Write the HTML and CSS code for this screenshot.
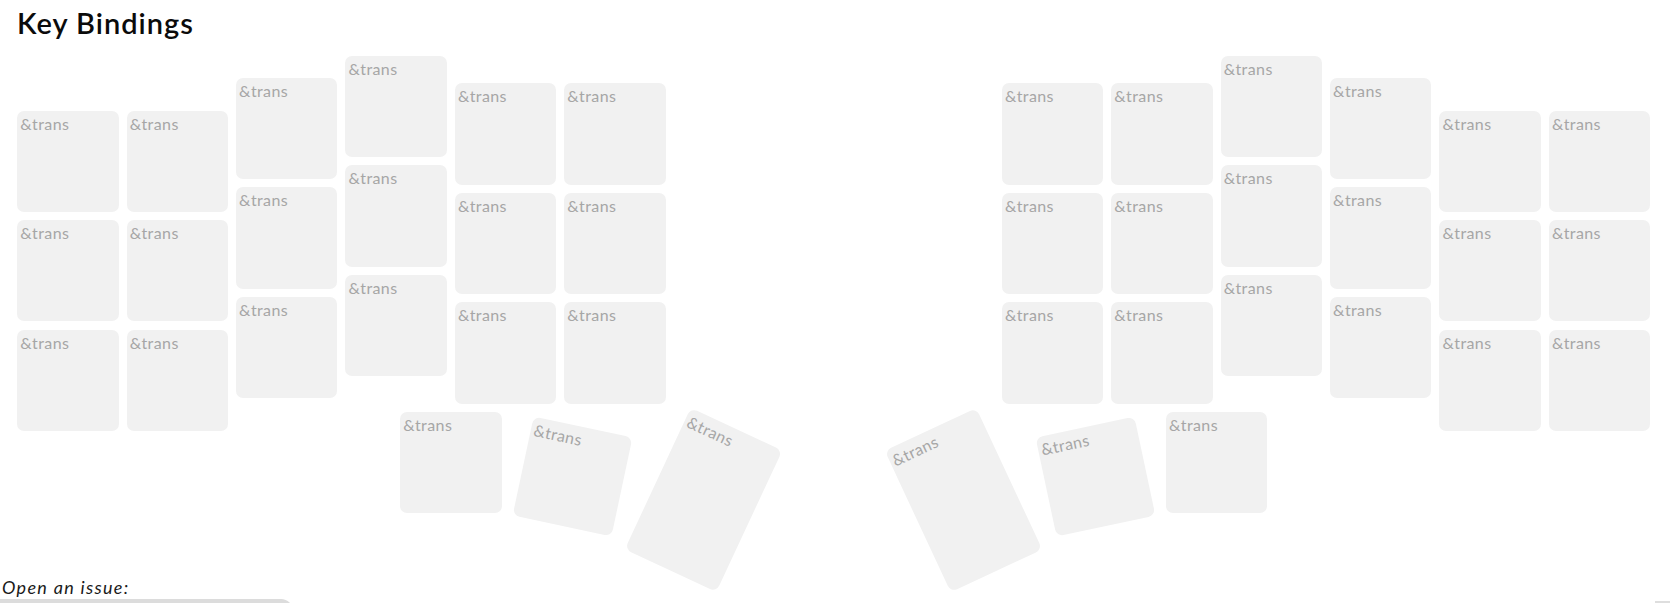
FILE: index.html
```html
<!DOCTYPE html>
<html lang="en">
<head>
<meta charset="utf-8">
<title>Key Bindings</title>
<link rel="stylesheet" href="styles.css">
</head>
<body>
<section class="bindings">
  <h2 class="title">Key Bindings</h2>
  <div class="keyboard">
    <div class="key" style="--x:0;--y:0.5"><span class="label">&amp;trans</span></div>
    <div class="key" style="--x:1;--y:0.5"><span class="label">&amp;trans</span></div>
    <div class="key" style="--x:2;--y:0.2"><span class="label">&amp;trans</span></div>
    <div class="key" style="--x:3;--y:0"><span class="label">&amp;trans</span></div>
    <div class="key" style="--x:4;--y:0.25"><span class="label">&amp;trans</span></div>
    <div class="key" style="--x:5;--y:0.25"><span class="label">&amp;trans</span></div>
    <div class="key" style="--x:9;--y:0.25"><span class="label">&amp;trans</span></div>
    <div class="key" style="--x:10;--y:0.25"><span class="label">&amp;trans</span></div>
    <div class="key" style="--x:11;--y:0"><span class="label">&amp;trans</span></div>
    <div class="key" style="--x:12;--y:0.2"><span class="label">&amp;trans</span></div>
    <div class="key" style="--x:13;--y:0.5"><span class="label">&amp;trans</span></div>
    <div class="key" style="--x:14;--y:0.5"><span class="label">&amp;trans</span></div>

    <div class="key" style="--x:0;--y:1.5"><span class="label">&amp;trans</span></div>
    <div class="key" style="--x:1;--y:1.5"><span class="label">&amp;trans</span></div>
    <div class="key" style="--x:2;--y:1.2"><span class="label">&amp;trans</span></div>
    <div class="key" style="--x:3;--y:1"><span class="label">&amp;trans</span></div>
    <div class="key" style="--x:4;--y:1.25"><span class="label">&amp;trans</span></div>
    <div class="key" style="--x:5;--y:1.25"><span class="label">&amp;trans</span></div>
    <div class="key" style="--x:9;--y:1.25"><span class="label">&amp;trans</span></div>
    <div class="key" style="--x:10;--y:1.25"><span class="label">&amp;trans</span></div>
    <div class="key" style="--x:11;--y:1"><span class="label">&amp;trans</span></div>
    <div class="key" style="--x:12;--y:1.2"><span class="label">&amp;trans</span></div>
    <div class="key" style="--x:13;--y:1.5"><span class="label">&amp;trans</span></div>
    <div class="key" style="--x:14;--y:1.5"><span class="label">&amp;trans</span></div>

    <div class="key" style="--x:0;--y:2.5"><span class="label">&amp;trans</span></div>
    <div class="key" style="--x:1;--y:2.5"><span class="label">&amp;trans</span></div>
    <div class="key" style="--x:2;--y:2.2"><span class="label">&amp;trans</span></div>
    <div class="key" style="--x:3;--y:2"><span class="label">&amp;trans</span></div>
    <div class="key" style="--x:4;--y:2.25"><span class="label">&amp;trans</span></div>
    <div class="key" style="--x:5;--y:2.25"><span class="label">&amp;trans</span></div>
    <div class="key" style="--x:9;--y:2.25"><span class="label">&amp;trans</span></div>
    <div class="key" style="--x:10;--y:2.25"><span class="label">&amp;trans</span></div>
    <div class="key" style="--x:11;--y:2"><span class="label">&amp;trans</span></div>
    <div class="key" style="--x:12;--y:2.2"><span class="label">&amp;trans</span></div>
    <div class="key" style="--x:13;--y:2.5"><span class="label">&amp;trans</span></div>
    <div class="key" style="--x:14;--y:2.5"><span class="label">&amp;trans</span></div>

    <div class="key" style="--x:3.5;--y:3.25"><span class="label">&amp;trans</span></div>
    <div class="key" style="--x:4.612;--y:3.378;--r:12deg"><span class="label">&amp;trans</span></div>
    <div class="key" style="--x:5.815;--y:3.343;--h:1.5;--r:25deg"><span class="label">&amp;trans</span></div>
    <div class="key" style="--x:8.188;--y:3.343;--h:1.5;--r:-25deg"><span class="label">&amp;trans</span></div>
    <div class="key" style="--x:9.392;--y:3.378;--r:-12deg"><span class="label">&amp;trans</span></div>
    <div class="key" style="--x:10.5;--y:3.25"><span class="label">&amp;trans</span></div>
  </div>
</section>
<footer class="issue">
  <p class="issue-text">Open an issue:</p>
  <div class="issue-row">
    <div class="issue-field"></div>
    <div class="issue-side"></div>
  </div>
</footer>
</body>
</html>
```

FILE: styles.css
```css
html, body {
  margin: 0;
  padding: 0;
  background: #ffffff;
}

body {
  font-family: "Lato", "Noto Sans", sans-serif;
  color: #111111;
  overflow: hidden;
  height: 603px;
}

.bindings {
  padding: 5px 17px 0 17px;
}

.title {
  margin: 0;
  font-size: 29px;
  line-height: 36px;
  font-weight: 600;
  color: #0b0b0b;
  letter-spacing: 1px;
}

.keyboard {
  --u: 109.4px;
  position: relative;
  margin-top: 15px;
  height: 520px;
  margin-left: 0.3px;
}

.key {
  position: absolute;
  left: calc(var(--x) * var(--u));
  top: calc(var(--y) * var(--u));
  width: calc(var(--w, 1) * var(--u) - 8px);
  height: calc(var(--h, 1) * var(--u) - 8px);
  transform: rotate(var(--r, 0deg));
  background: #f1f1f1;
  border-radius: 7px;
  box-sizing: border-box;
  padding: 3px 3px;
}

.label {
  display: block;
  font-size: 16px;
  line-height: 20px;
  color: #a6a6a6;
  letter-spacing: 0.4px;
  white-space: nowrap;
}

.issue {
  padding: 0;
}

.issue-text {
  margin: 0 0 0 2px;
  font-size: 18px;
  line-height: 22px;
  font-style: italic;
  font-weight: 400;
  letter-spacing: 1.3px;
  color: #1a1a1a;
}

.issue-row {
  display: flex;
  justify-content: space-between;
  align-items: flex-start;
  margin-top: 1px;
}

.issue-field {
  width: 293px;
  height: 20px;
  background: #dcdcdc;
  border-radius: 0 12px 0 0;
}

.issue-side {
  width: 15px;
  height: 4px;
  margin-top: 2px;
  background: #dedede;
}
```
